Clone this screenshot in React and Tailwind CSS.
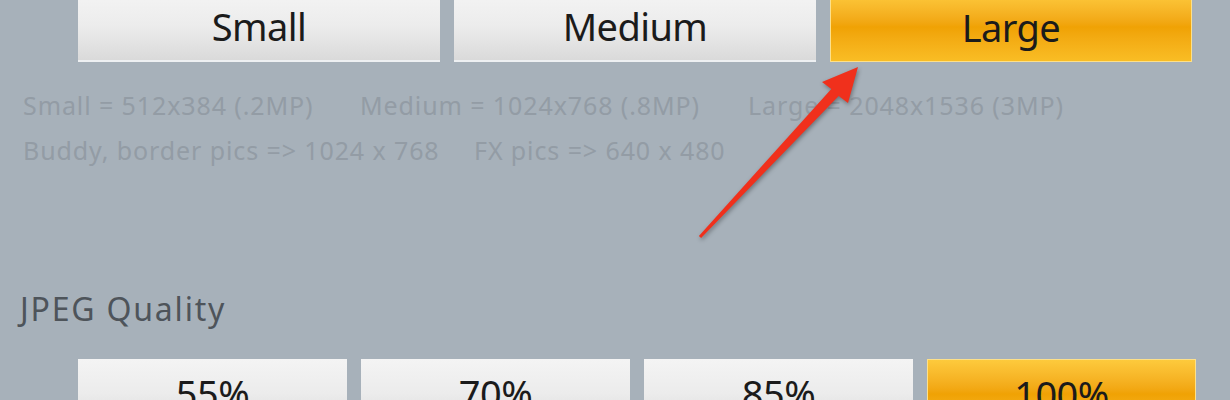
export default function App() {
  const font = { fontFamily: '"Noto Sans", "Open Sans", sans-serif' }
  const grey =
    "flex items-center justify-center bg-gradient-to-b from-[#f4f4f4] via-[#ececec] to-[#dadada] border-b-2 border-[#eef0f2] text-[#1b1b1b]"
  const orange =
    "flex items-center justify-center bg-gradient-to-b from-[#fdca3c] via-[#f0a204] to-[#f9bd24] border border-[#fde08a] text-[#1b1b1b]"

  return (
    <div
      className="relative h-[400px] w-[1230px] overflow-hidden bg-[#a7b1ba]"
      style={font}
    >
      {/* Size buttons */}
      <div className="-mt-[8px] grid grid-cols-[362px_362px_362px] gap-[14px] pl-[78px]">
        <button className={`${grey} h-[70px] text-[38px] tracking-[-0.6px]`}>Small</button>
        <button className={`${grey} h-[70px] text-[38px] tracking-[-0.6px]`}>Medium</button>
        <button className={`${orange} h-[70px] text-[38px] tracking-[-0.6px]`}>Large</button>
      </div>

      {/* Size info */}
      <div className="mt-[21px] pl-[23px] text-[25px] leading-[45px] tracking-[0.9px] text-[#939ca5]">
        <div className="flex">
          <span className="w-[337px]">Small = 512x384 (.2MP)</span>
          <span className="w-[388px]">Medium = 1024x768 (.8MP)</span>
          <span>Large = 2048x1536 (3MP)</span>
        </div>
        <div className="flex">
          <span className="w-[451px]">Buddy, border pics =&gt; 1024 x 768</span>
          <span>FX pics =&gt; 640 x 480</span>
        </div>
      </div>

      {/* JPEG quality */}
      <div className="mt-[116px] pl-[20px] text-[32px] leading-[40px] tracking-[1.8px] text-[#4e545a]">
        JPEG Quality
      </div>
      <div className="mt-[30px] grid grid-cols-[269px_269px_269px_269px] gap-[14px] pl-[78px]">
        <button className={`${grey} h-[70px] text-[38px] tracking-[-0.6px]`}>55%</button>
        <button className={`${grey} h-[70px] text-[38px] tracking-[-0.6px]`}>70%</button>
        <button className={`${grey} h-[70px] text-[38px] tracking-[-0.6px]`}>85%</button>
        <button className={`${orange} h-[70px] text-[38px] tracking-[-0.6px]`}>100%</button>
      </div>

      {/* Annotation arrow */}
      <svg
        className="pointer-events-none absolute left-0 top-0 drop-shadow-[1px_2px_2px_rgba(0,0,0,0.35)]"
        width="1230"
        height="400"
      >
        <polygon
          points="698.9,236 831.3,89.1 822,82 858,67 848,103 838.7,95.9 701.1,238"
          fill="#f0301c"
        />
      </svg>
    </div>
  )
}
